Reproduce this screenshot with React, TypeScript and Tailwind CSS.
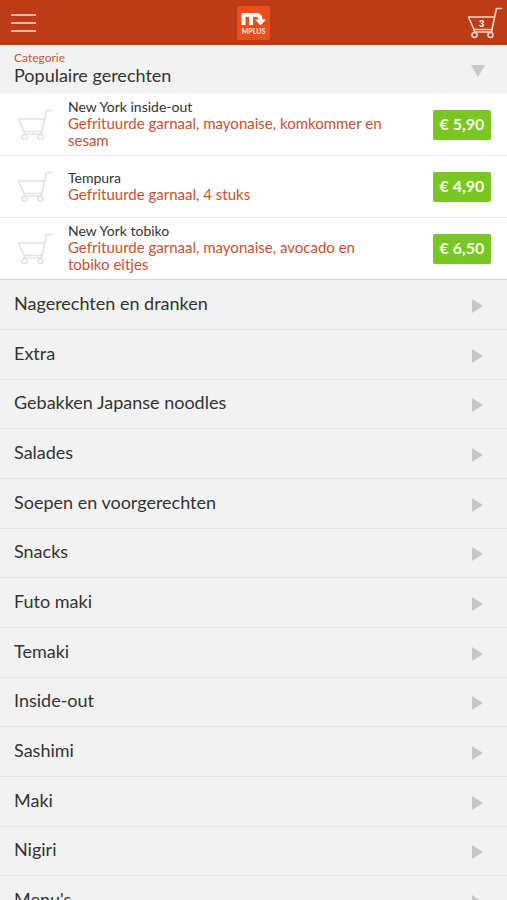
const dishes = [
  { name: 'New York inside-out', description: 'Gefrituurde garnaal, mayonaise, komkommer en sesam', price: '€ 5,90' },
  { name: 'Tempura', description: 'Gefrituurde garnaal, 4 stuks', price: '€ 4,90' },
  { name: 'New York tobiko', description: 'Gefrituurde garnaal, mayonaise, avocado en tobiko eitjes', price: '€ 6,50' },
];

const categories = [
  'Nagerechten en dranken',
  'Extra',
  'Gebakken Japanse noodles',
  'Salades',
  'Soepen en voorgerechten',
  'Snacks',
  'Futo maki',
  'Temaki',
  'Inside-out',
  'Sashimi',
  'Maki',
  'Nigiri',
  "Menu's",
];

function CartIcon({ className }: { className: string }) {
  return (
    <svg viewBox="0 0 36 32" fill="none" stroke="currentColor" strokeLinecap="round" strokeLinejoin="round" className={className} aria-hidden="true">
      <path d="M34.5 1.5H29.5L25 22.500H7L1.500 10H27.500" />
      <path d="M7 22.500L7.500 25H24.500L25 22.500" />
      <circle cx="7.500" cy="28" r="2.500" />
      <circle cx="23.500" cy="28" r="2.500" />
    </svg>
  );
}

function Logo() {
  return (
    <svg viewBox="0 0 34 34" className="size-[34px]" role="img" aria-label="MPLUS">
      <path d="M4 0H34V31Q34 34 31 34H1V3Q1 0 4 0Z" fill="#ea4e1b" />
      <path d="M7.500 19V9H20.500Q24.500 9 24.500 14" fill="none" stroke="#fff" strokeWidth="4" />
      <path d="M15 9V19" stroke="#fff" strokeWidth="4" />
      <path d="M19 13.500H30L24.500 19.500Z" fill="#fff" />
      <text x="17.500" y="28" textAnchor="middle" fill="#ffe4d8" fontSize="7" fontWeight="900" fontFamily="Lato, sans-serif">MPLUS</text>
    </svg>
  );
}

export default function App() {
  return (
    <div className="flex h-screen flex-col overflow-hidden bg-[#f2f2f2] font-['Lato',sans-serif] text-[#333]">
      <header className="grid h-[45px] shrink-0 grid-cols-3 items-center bg-[#bd3b17] px-1">
        <button type="button" aria-label="Menu" className="flex w-9 flex-col gap-1.5 px-[7px] py-2">
          <span className="h-0.5 w-[25px] bg-[#f3b9a6]" />
          <span className="h-0.5 w-[25px] bg-[#f3b9a6]" />
          <span className="h-0.5 w-[25px] bg-[#f3b9a6]" />
        </button>
        <div className="flex justify-center">
          <Logo />
        </div>
        <button type="button" aria-label="Winkelwagen, 3 artikelen" className="relative justify-self-end text-[#ffd3c2]">
          <CartIcon className="h-8 w-9 stroke-[1.600]" />
          <span className="absolute left-3 top-2.5 text-[9px] font-black text-white">3</span>
        </button>
      </header>

      <main className="min-h-0 flex-1 overflow-y-auto [scrollbar-width:none]">
        <button type="button" className="flex h-[49px] w-full items-center justify-between border-b border-[#f7f7f7] px-3.5 text-left">
          <span className="flex flex-col pb-0.5">
            <span className="text-xs leading-[14px] text-[#c8553a]">Categorie</span>
            <span className="text-lg leading-5">Populaire gerechten</span>
          </span>
          <svg viewBox="0 0 14 12" className="mr-2 mt-1 h-3 w-3.5" fill="#c8c8c8" aria-hidden="true">
            <path d="M0 0H14L7 12Z" />
          </svg>
        </button>

        <ul className="bg-white">
          {dishes.map((dish) => (
            <li key={dish.name} className="flex h-[62px] items-center border-b border-[#e9e9e9] pl-[17px] pr-4 last:border-[#d6d6d6]">
              <CartIcon className="h-8 w-9 shrink-0 stroke-[1.600] text-[#e2e2e2]" />
              <div className="ml-[15px] min-w-0 flex-1 pb-0.5 leading-[17px]">
                <h2 className="text-sm leading-[17px]">{dish.name}</h2>
                <p className="max-w-[320px] text-[15px] leading-[17px] text-[#c9502f]">{dish.description}</p>
              </div>
              <button type="button" className="h-[30px] w-[58px] rounded-xs bg-[#7ac622] pb-0.5 text-base font-bold text-[#f6ffe9]">
                {dish.price}
              </button>
            </li>
          ))}
        </ul>

        <ul>
          {categories.map((category) => (
            <li key={category} className="h-[50px] border-b border-[#e4e4e4] nth-[3n]:h-[49px]">
              <button type="button" className="flex h-full w-full items-center justify-between px-3.5 text-left text-lg">
                <span className="pb-1">{category}</span>
                <svg viewBox="0 0 11 14" className="mt-0.5 mr-2.5 h-3.5 w-[11px]" fill="#c6c6c6" aria-hidden="true">
                  <path d="M0 0L11 7L0 14Z" />
                </svg>
              </button>
            </li>
          ))}
        </ul>
      </main>
    </div>
  );
}
